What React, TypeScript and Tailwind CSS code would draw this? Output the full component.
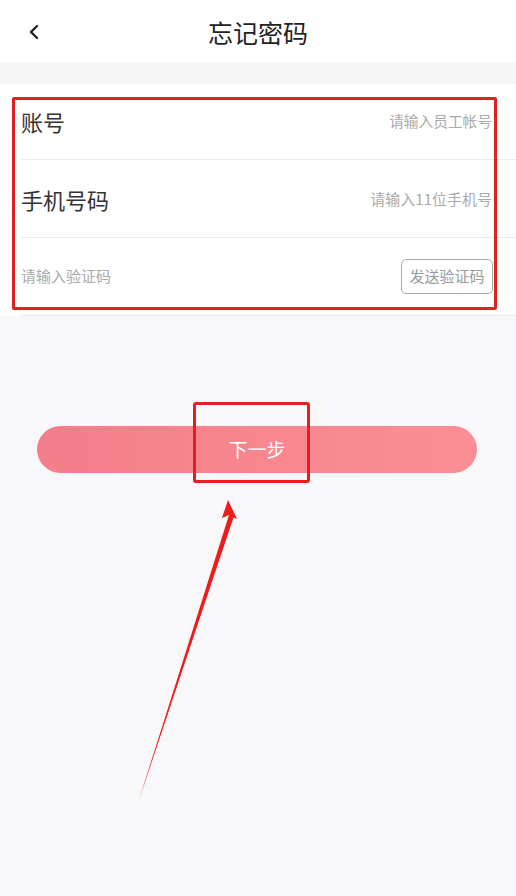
import React from "react";

export default function App() {
  return (
    <div
      className="relative w-[516px] h-[896px] bg-[#f8f8fa] overflow-hidden"
      style={{ fontFamily: '"Noto Sans CJK SC", "Noto Sans", sans-serif' }}
    >
      {/* Header */}
      <div className="relative h-[62px] bg-white flex items-center justify-center">
        <div className="absolute left-[24px] top-[21px] w-[20px] h-[22px] flex items-center justify-center">
          <svg width="12" height="16" viewBox="0 0 12 16" fill="none">
            <path d="M9 2 L3 8 L9 14" stroke="#222" strokeWidth="2.4" strokeLinecap="round" strokeLinejoin="round" />
          </svg>
        </div>
        <span className="text-[25px] text-[#222] leading-none mt-[2px]">忘记密码</span>
      </div>

      <div className="h-[22px] bg-[#f7f7f7]" />

      {/* Form */}
      <div className="bg-white">
        <div className="ml-[21px] h-[76px] border-b border-[#ececec] flex items-center justify-between pr-[24px]">
          <span className="text-[22px] text-[#333]">账号</span>
          <span className="text-[14.7px] text-[#aaaaaa]">请输入员工帐号</span>
        </div>
        <div className="ml-[21px] h-[78px] border-b border-[#ececec] flex items-center justify-between pr-[24px] pt-[2px]">
          <span className="text-[22px] text-[#333]">手机号码</span>
          <span className="text-[15px] text-[#aaaaaa]">请输入11位手机号</span>
        </div>
        <div className="ml-[21px] h-[78px] border-b border-[#ececec] flex items-center justify-between pr-[23px]">
          <span className="text-[15px] text-[#aaaaaa]">请输入验证码</span>
          <div className="w-[92px] h-[35px] border border-[#aaaaaa] rounded-[5px] flex items-center justify-center">
            <span className="text-[15px] text-[#999999]">发送验证码</span>
          </div>
        </div>
      </div>

      {/* Button */}
      <div className="mt-[110px] pl-[37px] pr-[39px]">
        <div className="h-[47px] rounded-full bg-gradient-to-r from-[#f47e8a] to-[#fb8e94] flex items-center justify-center">
          <span className="text-[19px] text-white">下一步</span>
        </div>
      </div>

      {/* Annotations */}
      <div className="absolute left-[12px] top-[97px] w-[485px] h-[213px] border-[3px] border-[#e02222] rounded-[2px]" />
      <div className="absolute left-[193px] top-[402px] w-[117px] h-[81px] border-[3px] border-[#e61e1e] rounded-[3px]" />
      <svg className="absolute left-0 top-0" width="516" height="896" viewBox="0 0 516 896">
        <path d="M228 500 L237 519 L232 517 L139 800 L229 515 L222 518 Z" fill="#ee1c1c" />
        <path d="M231 515 L139 800 L234 516 Z" fill="#ee1c1c" />
      </svg>
    </div>
  );
}
